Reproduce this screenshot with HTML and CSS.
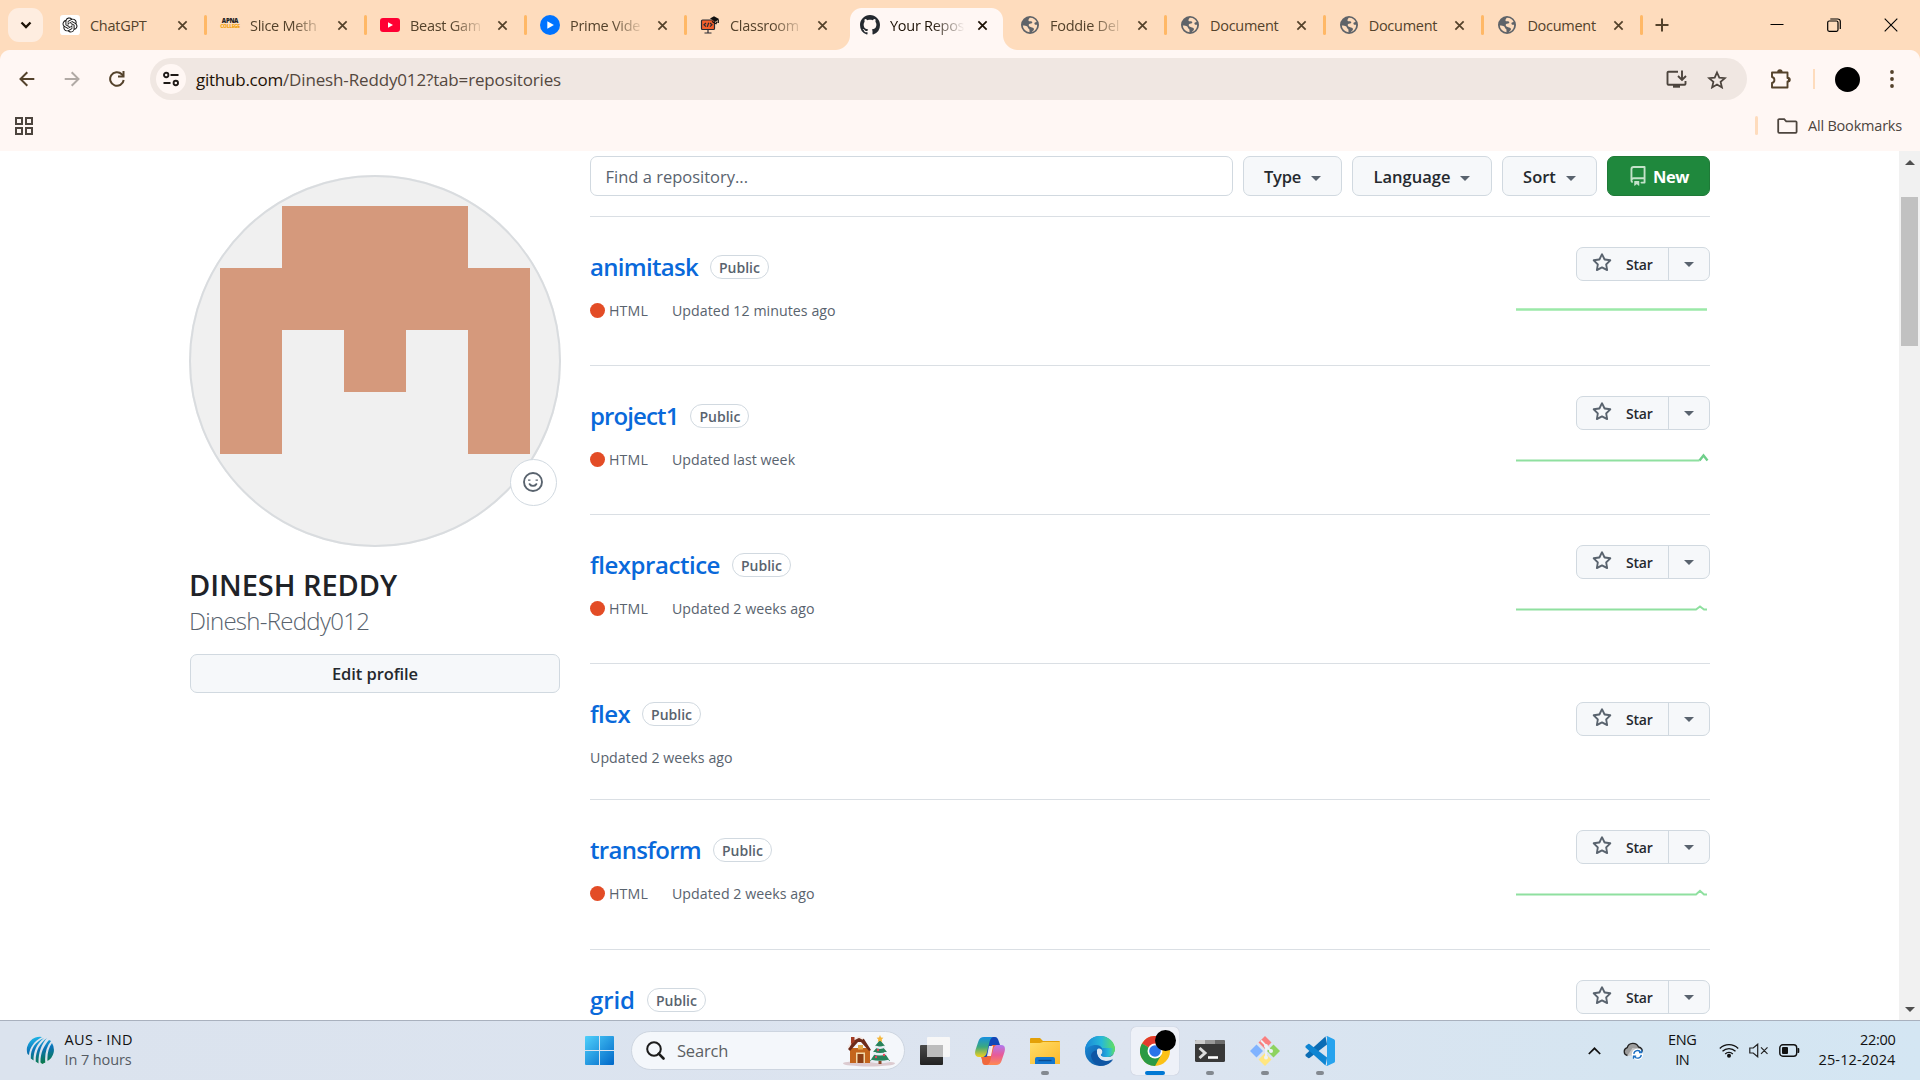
FILE: index.html
```
<!DOCTYPE html>
<html lang="en">
<head>
<meta charset="utf-8">
<title>Your Repositories</title>
<link rel="stylesheet" href="styles.css">
</head>
<body>
<svg class="defs" width="0" height="0" aria-hidden="true">
  <defs>
    <symbol id="i-close" viewBox="0 0 12 12"><path d="M1.500 1.500l9 9M10.500 1.500l-9 9" fill="none" stroke="currentColor" stroke-width="1.900"/></symbol>
    <symbol id="i-globe" viewBox="0 0 24 24"><path fill="#5f6368" d="M12 0a12 12 0 1 0 0 24 12 12 0 0 0 0-24zM2.400 12.500c2.500.2 4.200.1 6 1.600 1.300 1.100.5 2.300 1.900 3 1.200.6 1.100 1.500 1 4.400A9.600 9.600 0 0 1 2.400 12.500zM14.500 21.300c.6-1.700 2.600-1.700 2.800-3.700.1-2-2.500-1.900-4.300-2.800-1.600-.8-3-1.300-2.700-3.100.3-2 2.600-1.300 4.200-2.200 1.400-.8.300-2.300-1.300-2.500-1.600-.2-2.500.5-3.100-.8-.6-1.300.4-2.400 1.300-3.700 4.600-.4 8 2.100 9.500 5.500-1.900.3-3.300.8-3 2.200.3 1.500 2 1.600 3.600 1.500a9.600 9.600 0 0 1-7 9.600z"/></symbol>
    <symbol id="i-star" viewBox="0 0 16 16"><path fill="currentColor" d="M8 .25a.75.75 0 0 1 .673.418l1.882 3.815 4.210.612a.75.75 0 0 1 .416 1.279l-3.046 2.970.719 4.192a.751.751 0 0 1-1.088.791L8 12.347l-3.766 1.980a.75.75 0 0 1-1.088-.790l.720-4.194L.818 6.374a.75.75 0 0 1 .416-1.280l4.210-.611L7.327.668A.75.75 0 0 1 8 .25Zm0 2.445L6.615 5.500a.75.75 0 0 1-.564.410l-3.097.450 2.240 2.184a.75.75 0 0 1 .216.664l-.528 3.084 2.769-1.456a.75.75 0 0 1 .698 0l2.770 1.456-.530-3.084a.75.75 0 0 1 .216-.664l2.240-2.183-3.096-.450a.75.75 0 0 1-.564-.410L8 2.694Z"/></symbol>
  </defs>
</svg>

<div class="tabstrip">
  <div class="tab-search"><svg width="12" height="8" viewBox="0 0 12 8"><path d="M1.500 1.500L6 6l4.500-4.500" fill="none" stroke="#1d1206" stroke-width="2.300"/></svg></div>
  <div class="tab"><span class="fav"><svg width="20" height="20" viewBox="-4 -4 32 32"><rect x="-4" y="-4" width="32" height="32" rx="5" fill="#fff"/><path fill="#111" d="M22.2819 9.8211a5.9847 5.9847 0 0 0-.5157-4.9108 6.0462 6.0462 0 0 0-6.5098-2.9A6.0651 6.0651 0 0 0 4.9807 4.1818a5.9847 5.9847 0 0 0-3.9977 2.9 6.0462 6.0462 0 0 0 .7427 7.0966 5.98 5.98 0 0 0 .511 4.9107 6.051 6.051 0 0 0 6.5146 2.9001A5.9847 5.9847 0 0 0 13.2599 24a6.0557 6.0557 0 0 0 5.7718-4.2058 5.9894 5.9894 0 0 0 3.9977-2.9001 6.0557 6.0557 0 0 0-.7475-7.0729zm-9.022 12.6081a4.4755 4.4755 0 0 1-2.8764-1.0408l.1419-.0804 4.7783-2.7582a.7948.7948 0 0 0 .3927-.6813v-6.7369l2.02 1.1686a.071.071 0 0 1 .038.052v5.5826a4.504 4.504 0 0 1-4.4945 4.4944zm-9.6607-4.1254a4.4708 4.4708 0 0 1-.5346-3.0137l.142.0852 4.783 2.7582a.7712.7712 0 0 0 .7806 0l5.8428-3.3685v2.3324a.0804.0804 0 0 1-.0332.0615L9.74 19.9502a4.4992 4.4992 0 0 1-6.1408-1.6464zM2.3408 7.8956a4.485 4.485 0 0 1 2.3655-1.9728V11.6a.7664.7664 0 0 0 .3879.6765l5.8144 3.3543-2.0201 1.1685a.0757.0757 0 0 1-.071 0l-4.8303-2.7865A4.504 4.504 0 0 1 2.3408 7.872zm16.5963 3.8558L13.1038 8.364 15.1192 7.2a.0757.0757 0 0 1 .071 0l4.8303 2.7913a4.4944 4.4944 0 0 1-.6765 8.1042v-5.6772a.79.79 0 0 0-.407-.667zm2.0107-3.0231l-.142-.0852-4.7735-2.7818a.7759.7759 0 0 0-.7854 0L9.409 9.2297V6.8974a.0662.0662 0 0 1 .0284-.0615l4.8303-2.7866a4.4992 4.4992 0 0 1 6.6802 4.66zM8.3065 12.863l-2.02-1.1638a.0804.0804 0 0 1-.038-.0567V6.0742a4.4992 4.4992 0 0 1 7.3757-3.4537l-.142.0805L8.704 5.459a.7948.7948 0 0 0-.3927.6813zm1.0976-2.3654l2.602-1.4998 2.6069 1.4998v2.9994l-2.5974 1.4997-2.6067-1.4997Z"/></svg></span><span class="title">ChatGPT</span><svg class="x"><use href="#i-close"/></svg></div>
  <div class="tab"><span class="fav apna"><b>APNA</b><i>COLLEGE</i></span><span class="title fade">Slice Meth</span><svg class="x"><use href="#i-close"/></svg></div>
  <div class="tab"><span class="fav"><svg width="20" height="20" viewBox="0 0 20 20"><rect y="3" width="20" height="14" rx="3" fill="#ff0033"/><path d="M8 7.200v5.600l5-2.800z" fill="#fff"/></svg></span><span class="title fade">Beast Gam</span><svg class="x"><use href="#i-close"/></svg></div>
  <div class="tab"><span class="fav"><svg width="20" height="20" viewBox="0 0 20 20"><circle cx="10" cy="10" r="10" fill="#0073ff"/><path d="M7.300 6.300v7.400l6.600-3.700z" fill="#fff"/></svg></span><span class="title fade">Prime Vide</span><svg class="x"><use href="#i-close"/></svg></div>
  <div class="tab last"><span class="fav"><svg width="20" height="20" viewBox="0 0 20 20"><rect x="1.500" y="5" width="13" height="9.500" rx="1" fill="#f4602c" stroke="#2b2b33" stroke-width="1.200"/><path d="M6 8l-2 1.800 2 1.800M10 8l2 1.800-2 1.800M8.700 7.700l-1.400 4.200M8 15v2.500M4.500 18h7" stroke="#2b2b33" stroke-width="1.200" fill="none"/><path d="M10 3.500l4-2.300 5 2.800-3.300 2.800z" fill="#111"/><path d="M12 6.500l4 2.200 1-2M18.300 4.500v3.500" stroke="#111" stroke-width="1.200" fill="none"/></svg></span><span class="title fade">Classroom</span><svg class="x"><use href="#i-close"/></svg></div>
  <div class="tab active"><span class="fav"><svg width="20" height="20" viewBox="0 0 16 16"><path fill="#24292f" d="M8 0c4.420 0 8 3.580 8 8a8.013 8.013 0 0 1-5.450 7.590c-.400.080-.550-.170-.550-.380 0-.270.010-1.130.010-2.200 0-.750-.250-1.230-.540-1.480 1.780-.200 3.650-.880 3.650-3.950 0-.880-.310-1.590-.820-2.150.080-.200.360-1.020-.080-2.120 0 0-.670-.220-2.200.820-.640-.180-1.320-.270-2-.270-.680 0-1.360.090-2 .270-1.530-1.030-2.200-.820-2.200-.820-.440 1.100-.160 1.920-.080 2.120-.510.560-.820 1.280-.820 2.150 0 3.060 1.860 3.750 3.640 3.950-.230.200-.440.550-.510 1.070-.460.210-1.610.550-2.330-.660-.150-.240-.600-.830-1.230-.820-.670.010-.270.380.010.530.340.190.730.900.820 1.130.160.450.680 1.310 2.690.940 0 .670.010 1.300.010 1.490 0 .210-.150.450-.550.380A7.995 7.995 0 0 1 0 8c0-4.420 3.580-8 8-8Z"/></svg></span><span class="title fade">Your Repos</span><svg class="x"><use href="#i-close"/></svg></div>
  <div class="tab"><span class="fav"><svg width="18" height="18"><use href="#i-globe"/></svg></span><span class="title fade">Foddie Del</span><svg class="x"><use href="#i-close"/></svg></div>
  <div class="tab doc"><span class="fav"><svg width="18" height="18"><use href="#i-globe"/></svg></span><span class="title">Document</span><svg class="x"><use href="#i-close"/></svg></div>
  <div class="tab doc"><span class="fav"><svg width="18" height="18"><use href="#i-globe"/></svg></span><span class="title">Document</span><svg class="x"><use href="#i-close"/></svg></div>
  <div class="tab doc"><span class="fav"><svg width="18" height="18"><use href="#i-globe"/></svg></span><span class="title">Document</span><svg class="x"><use href="#i-close"/></svg></div>
  <svg class="newtab" width="14" height="14" viewBox="0 0 14 14"><path d="M7 .5v13M.5 7h13" stroke="#54422b" stroke-width="2"/></svg>
  <div class="winctl">
    <svg width="14" height="14" viewBox="0 0 14 14"><path d="M.5 6.500h13" stroke="#000"/></svg>
    <svg width="14" height="14" viewBox="0 0 14 14" fill="none" stroke="#000" stroke-width="1.200"><rect x=".7" y="3" width="10.300" height="10.300" rx="1.500"/><path d="M3.300 1h7.500a2.500 2.500 0 0 1 2.500 2.500v7.500"/></svg>
    <svg width="14" height="14" viewBox="0 0 14 14"><path d="M.7.700l12.600 12.600M13.300.7L.7 13.300" stroke="#000" stroke-width="1.100"/></svg>
  </div>
</div>

<div class="chrome">
  <div class="toolbar">
    <svg class="nav" width="16" height="16" viewBox="0 0 16 16"><path d="M15.300 8H2M8.300 1.200L1.500 8l6.800 6.800" fill="none" stroke="#54422b" stroke-width="2"/></svg>
    <svg class="nav" width="16" height="16" viewBox="0 0 16 16"><path d="M.7 8H14M7.700 1.200L14.500 8l-6.800 6.800" fill="none" stroke="#b1aaa5" stroke-width="2"/></svg>
    <svg class="nav" width="16" height="16" viewBox="0 0 16 16"><path d="M14.700 9A6.800 6.800 0 1 1 12.800 3.200L14.500 5" fill="none" stroke="#54422b" stroke-width="2"/><path d="M15.500 0v6.500H9V4.500h4.500V0z" fill="#54422b"/></svg>
    <div class="omnibox">
      <span class="site"><svg width="16" height="16" viewBox="0 0 16 16" fill="none" stroke="#1f1a17" stroke-width="1.900"><circle cx="3.200" cy="4" r="2.200"/><path d="M7.500 4h8M.5 12h7"/><circle cx="12.800" cy="12" r="2.200"/></svg></span>
      <span class="url"><b>github.com</b>/Dinesh-Reddy012?tab=repositories</span>
      <svg class="install" width="21" height="19" viewBox="0 0 21 19"><path d="M12 1.700H2.500a1 1 0 0 0-1 1v11a1 1 0 0 0 1 1h16a1 1 0 0 0 1-1V11" fill="none" stroke="#4d453e" stroke-width="1.900"/><path d="M7 14.500h7v3.200H7z" fill="#4d453e"/><path d="M16 .5v9M12 6l4 4 4-4" fill="none" stroke="#4d453e" stroke-width="1.900"/></svg>
      <svg class="fave" width="20" height="19" viewBox="0 0 20 19"><path d="M10 2.500l2.300 5.200 5.600.5-4.300 3.700 1.300 5.500-4.900-2.900-4.900 2.900 1.300-5.500L2.100 8.200l5.600-.5z" fill="none" stroke="#4d453e" stroke-width="1.800"/></svg>
    </div>
    <svg class="ext" width="22" height="22" viewBox="0 0 22 22"><path d="M2 4.500h15.500v5.500a1.500 1.500 0 0 1 0 3.500v6H2v-4.500c3.200-.8 3.200-5.200 0-6z" fill="none" stroke="#54422b" stroke-width="1.900" stroke-linejoin="round"/><path d="M7.200 4a2.700 2.700 0 0 1 5.400 0zM18 9a2.700 2.700 0 0 1 0 5.400z" fill="#54422b"/></svg>
    <i class="bar"></i>
    <i class="me"></i>
    <svg class="dots" width="4" height="18" viewBox="0 0 4 18" fill="#54422b"><circle cx="2" cy="2" r="1.900"/><circle cx="2" cy="9" r="1.900"/><circle cx="2" cy="16" r="1.900"/></svg>
  </div>
  <div class="bookmarks">
    <svg width="18" height="18" viewBox="0 0 18 18" fill="none" stroke="#4d453e" stroke-width="2"><path d="M1 1h6v6H1zM11 1h6v6h-6zM1 11h6v6H1zM11 11h6v6h-6z"/></svg>
    <i class="bar"></i>
    <svg width="21" height="16" viewBox="0 0 21 16"><path d="M1.200 2.200a1 1 0 0 1 1-1h5l2 2.100h9.400a1 1 0 0 1 1 1v9.500a1 1 0 0 1-1 1H2.200a1 1 0 0 1-1-1z" fill="none" stroke="#4d453e" stroke-width="1.800"/></svg>
    <span class="allb">All Bookmarks</span>
  </div>
</div>

<div class="page">
  <main class="content">
    <aside class="profile">
      <div class="avatar">
        <svg width="372" height="372" viewBox="0 0 420 420"><rect width="420" height="420" fill="#f0f0f0"/><path fill="#d5997c" d="M105 35h210v70h70v210h-70V175h-70v70h-70v-70h-70v140H35V105h70z"/></svg>
        <span class="status"><svg width="20" height="20" viewBox="0 0 16 16" fill="none" stroke="#59636e" stroke-width="1.500"><circle cx="8" cy="8" r="7.200"/><path d="M5.300 9.700c1.300 1.900 4.100 1.900 5.400 0" stroke-linecap="round"/><path d="M5 6v1M11 6v1" stroke-width="1.900"/></svg></span>
      </div>
      <h1><span class="name">DINESH REDDY</span><span class="login">Dinesh-Reddy012</span></h1>
      <button class="edit"><span>Edit profile</span></button>
    </aside>
    <section class="repos">
      <div class="filters">
        <div class="find"><span>Find a repository...</span></div>
        <button class="w-type"><span>Type</span><i class="caret"></i></button>
        <button class="w-lang"><span>Language</span><i class="caret"></i></button>
        <button class="w-sort"><span>Sort</span><i class="caret"></i></button>
        <button class="new"><svg width="20" height="20" viewBox="0 0 16 16"><path fill="#c4e2ca" d="M2 2.500A2.500 2.500 0 0 1 4.500 0h8.750a.75.75 0 0 1 .75.75v12.500a.75.75 0 0 1-.75.75h-2.500a.75.75 0 0 1 0-1.500h1.750v-2h-8a1 1 0 0 0-.714 1.700.75.75 0 1 1-1.072 1.050A2.495 2.495 0 0 1 2 11.500Zm10.500-1h-8a1 1 0 0 0-1 1v6.708A2.486 2.486 0 0 1 4.500 9h8ZM5 12.250a.25.25 0 0 1 .25-.250h3.500a.25.25 0 0 1 .25.250v3.250a.25.25 0 0 1-.400.200l-1.450-1.087a.249.249 0 0 0-.300 0L5.400 15.700a.25.25 0 0 1-.400-.200Z"/></svg><span>New</span></button>
      </div>
      <ul class="list">
        <li><div><h3><a class="t1">animitask</a><em><span>Public</span></em></h3><p><i class="dot"></i><span class="lang">HTML</span><span class="upd">Updated 12 minutes ago</span></p></div>
          <div class="side"><div class="starbtn"><span><svg width="20" height="20"><use href="#i-star"/></svg><b>Star</b></span><span><i class="caret"></i></span></div><svg class="spark" width="194" height="15"><path d="M0 10.500h191" stroke="#9be9a8" stroke-width="2.500"/></svg></div></li>
        <li><div><h3><a class="t2">project1</a><em><span>Public</span></em></h3><p><i class="dot"></i><span class="lang">HTML</span><span class="upd">Updated last week</span></p></div>
          <div class="side"><div class="starbtn"><span><svg width="20" height="20"><use href="#i-star"/></svg><b>Star</b></span><span><i class="caret"></i></span></div><svg class="spark" width="194" height="15"><path d="M0 12.500h183.500" fill="none" stroke="#8fe0a0" stroke-width="2"/><path d="M183.500 12.500l4-5 4 5" fill="none" stroke="#6fcf8a" stroke-width="2.400"/></svg></div></li>
        <li><div><h3><a class="t3">flexpractice</a><em><span>Public</span></em></h3><p><i class="dot"></i><span class="lang">HTML</span><span class="upd">Updated 2 weeks ago</span></p></div>
          <div class="side"><div class="starbtn"><span><svg width="20" height="20"><use href="#i-star"/></svg><b>Star</b></span><span><i class="caret"></i></span></div><svg class="spark" width="194" height="15"><path d="M0 12.500h180l4-3 4 3h3" fill="none" stroke="#8fe0a0" stroke-width="2"/></svg></div></li>
        <li class="short"><div><h3><a class="t4">flex</a><em><span>Public</span></em></h3><p><span class="upd">Updated 2 weeks ago</span></p></div>
          <div class="side"><div class="starbtn"><span><svg width="20" height="20"><use href="#i-star"/></svg><b>Star</b></span><span><i class="caret"></i></span></div></div></li>
        <li class="tall"><div><h3><a class="t5">transform</a><em><span>Public</span></em></h3><p><i class="dot"></i><span class="lang">HTML</span><span class="upd">Updated 2 weeks ago</span></p></div>
          <div class="side"><div class="starbtn"><span><svg width="20" height="20"><use href="#i-star"/></svg><b>Star</b></span><span><i class="caret"></i></span></div><svg class="spark" width="194" height="15"><path d="M0 12.500h180l4-3.700 4 3.700h3" fill="none" stroke="#8fe0a0" stroke-width="2"/></svg></div></li>
        <li><div><h3><a class="t6">grid</a><em><span>Public</span></em></h3></div>
          <div class="side"><div class="starbtn"><span><svg width="20" height="20"><use href="#i-star"/></svg><b>Star</b></span><span><i class="caret"></i></span></div></div></li>
      </ul>
    </section>
  </main>
  <div class="scroll"><i class="up"></i><i class="thumb"></i><i class="down"></i></div>
</div>

<div class="taskbar">
  <div class="widget">
    <svg width="28" height="29" viewBox="0 0 28 29"><defs><linearGradient id="gw" x1=".2" y1="0" x2=".4" y2="1"><stop offset="0" stop-color="#1fb9ea"/><stop offset=".5" stop-color="#0b72b6"/><stop offset="1" stop-color="#0a7a4c"/></linearGradient></defs><path fill="url(#gw)" d="M16 1a13 13 0 0 0-14.500 17l1.500 1C3.500 12 8 5 16 1zM18 2C9 6 4.500 13 4.800 22.500l2.700 2C7.500 15 10.500 8 18 2zM21 2c-7.500 5.500-11.500 13-11.300 23.500l2.800 2C12.300 17 15 9 21 2zM23 4c-5.500 6-8.800 14-8.500 22.500l1.800 1.500 3-1.500C18.500 18 20.500 10.500 25 5zM26 7c-3.500 4.500-5 11-4.500 18A13 13 0 0 0 26 7z"/></svg>
    <div><span class="w1">AUS - IND</span><span class="w2">In 7 hours</span></div>
  </div>
  <div class="apps">
    <svg class="start" width="29" height="29" viewBox="0 0 29 29"><defs><linearGradient id="gs" x1="0" y1="0" x2="1" y2="1"><stop offset="0" stop-color="#4fd0fb"/><stop offset="1" stop-color="#0067c8"/></linearGradient></defs><path fill="url(#gs)" d="M1 0h13v14H0V1a1 1 0 0 1 1-1zM15 0h13a1 1 0 0 1 1 1v13H15zM0 15h14v14H1a1 1 0 0 1-1-1zM15 15h14v13a1 1 0 0 1-1 1H15z"/></svg>
    <div class="search"><svg width="19" height="19" viewBox="0 0 19 19"><circle cx="8" cy="8" r="6.800" fill="none" stroke="#1c1c1c" stroke-width="2"/><path d="M12.700 12.700l4.800 4.800" stroke="#1c1c1c" stroke-width="2.600" stroke-linecap="round"/></svg><span class="stext">Search</span>
      <svg class="house" width="54" height="32" viewBox="0 0 54 32"><ellipse cx="27" cy="28.500" rx="26" ry="3" fill="#dccbd0"/><path d="M8 13h20v15H8z" fill="#c4651c"/><path d="M6 14L11 5l6-3 5 2 7 11-2 1-8-9h-3l-8 9z" fill="#6d2b1a"/><path d="M6 13L11 5l6-3 4 2" fill="none" stroke="#f4e9e4" stroke-width="1.600"/><path d="M9 2h3.500v5L9 9z" fill="#a33c24"/><path d="M14 17.500h9V28h-9z" fill="#f2d8a8"/><path d="M15.500 19h6v9h-6z" fill="#8e3f14"/><rect x="16" y="10" width="5" height="4.500" fill="#e2a94b"/><path d="M38 5l5 6h-3l5 6h-3l6 9H28l6-9h-3l5-6h-3z" fill="#27835b"/><path d="M33 11.500q5 2.500 10 0M31 18q7 2.500 14 0M29 26q9 2 18 0" stroke="#e8edf4" stroke-width="2.400" fill="none"/><path d="M38 0l1 2.400 2.400.3-1.700 1.700.5 2.500L38 5.700l-2.200 1.200.5-2.500-1.700-1.700 2.400-.3z" fill="#f4b63a"/><g fill="#e8465c"><circle cx="36" cy="15" r="1.200"/><circle cx="42" cy="20" r="1.200"/><circle cx="34" cy="22" r="1.200"/></g><path d="M36.500 26h3v3h-3z" fill="#8a4a2a"/></svg></div>
    <div class="app"><svg width="30" height="30" viewBox="0 0 30 30"><defs><linearGradient id="gt" x1="0" y1="0" x2="0" y2="1"><stop offset="0" stop-color="#4a4a4a"/><stop offset="1" stop-color="#222"/></linearGradient></defs><rect x="0" y="9" width="23" height="20" rx="1" fill="url(#gt)"/><rect x="7" y="1" width="23" height="20" rx="1" fill="#f7f7f7"/><path d="M7 9h16v12H8a1 1 0 0 1-1-1z" fill="#bdbdbd"/></svg></div>
    <div class="app"><svg width="30" height="28" viewBox="0 0 30 28"><defs><linearGradient id="gc1" x1="0" y1="0" x2="0" y2="1"><stop offset="0" stop-color="#1690e0"/><stop offset=".5" stop-color="#3ca97e"/><stop offset="1" stop-color="#f3cf1d"/></linearGradient><linearGradient id="gc2" x1="0" y1="0" x2="0" y2="1"><stop offset="0" stop-color="#b07af0"/><stop offset=".5" stop-color="#e85a98"/><stop offset="1" stop-color="#ff8a50"/></linearGradient></defs><path d="M9 0h11c2 0 3 1.500 4 5l1 3h-4c-2 0-3 1-4 4l-3 10H7z" fill="#1246b8"/><path d="M9 0h9c-2.500 1-3 3-4 7l-2 8c-1 3.500-2 5-5 5H4c-4 0-4.500-3-3.500-7L3.500 4C4.500 1.500 6 0 9 0z" fill="url(#gc1)"/><path d="M21 28H10c-2 0-3-1.500-3-5l-1-3h4c2 0 3-1 4-4l3-8h6z" fill="#f0683c"/><path d="M21 28h-9c2.500-1 3-3 4-7l2-8c1-3.500 2-5 5-5h3c4 0 4.500 3 3.500 7l-3 9c-1 2.500-2.500 4-5.500 4z" fill="url(#gc2)"/><path d="M14 9h4l-2 10h-4z" fill="#fff" opacity=".85"/></svg></div>
    <div class="app run"><svg width="30" height="26" viewBox="0 0 30 26"><defs><linearGradient id="ge" x1="0" y1="0" x2="1" y2="1"><stop offset="0" stop-color="#ffdd68"/><stop offset="1" stop-color="#fdb92a"/></linearGradient></defs><path d="M0 1a1 1 0 0 1 1-1h9l3 3h16a1 1 0 0 1 1 1v8H0z" fill="#e3a008"/><path d="M0 5h10l3-1h17v22H0z" fill="url(#ge)"/><path d="M5 26v-5a2 2 0 0 1 2-2h16a2 2 0 0 1 2 2v5z" fill="#1377cf"/><path d="M8.500 22.500h13" stroke="#0b4c8f" stroke-width="1.400"/></svg></div>
    <div class="app"><svg width="30" height="30" viewBox="0 0 30 30"><defs><linearGradient id="gg" x1="0" y1="0" x2="1" y2="0"><stop offset="0" stop-color="#1a86d8"/><stop offset=".55" stop-color="#27b9d8"/><stop offset="1" stop-color="#62e05c"/></linearGradient><linearGradient id="gg2" x1="0" y1="0" x2="1" y2="1"><stop offset="0" stop-color="#1b90dc"/><stop offset="1" stop-color="#0c4b96"/></linearGradient></defs><circle cx="15" cy="15" r="15" fill="url(#gg2)"/><path d="M0 14.500C0 6 7 0 15 0c9 0 15 6.500 15 13 0 5-4 8-8.500 8-4 0-5.500-1.500-5-2.500 3-3 1-9.500-5.500-9.500C6 9 1.500 11.500 0 14.500z" fill="url(#gg)"/><path d="M12 14c-1 6 3 11 9 11 3 0 5-1 7-2 1-.5 1.500 0 1 .8L31 24V12l-3 7c-2 2-5 2.300-7 2-4-.3-5.500-1.500-5-2.500 1-1 1.500-2 1.300-3.500C17 12.500 13 11.500 12 14z" fill="#dde7f2"/><path d="M30 12c0 5.500-4 9-8.500 9-4 0-5.500-1.500-5-2.500C18.500 16.500 18 14 17 12z" fill="url(#gg)"/><path d="M6 20c1 6 6 10 10 9.800 5 0 9.500-2.300 12-6.300-2 1-4 1.500-7 1.500-5.500 0-10-5-9-10.500C9 14 6 17 6 20z" fill="#0f56a4"/></svg></div>
    <div class="app on"><svg width="30" height="30" viewBox="0 0 30 30"><circle cx="15" cy="15" r="15" fill="#fbc116"/><path d="M15 15L2 7.500A15 15 0 0 1 28 7.500z" fill="#e33b2e"/><path d="M15 15L2 7.500A15 15 0 0 0 15 30l6.500-11.500z" fill="#2b9a45"/><circle cx="15" cy="15" r="7.500" fill="#fff"/><circle cx="15" cy="15" r="5.800" fill="#2a74ea"/></svg><i class="blob"></i></div>
    <div class="app run"><svg width="30" height="22" viewBox="0 0 30 22"><rect width="30" height="22" rx="1.500" fill="#383838"/><path d="M1.500 0H10v4H0V1.500A1.500 1.500 0 0 1 1.500 0z" fill="#ccc"/><path d="M10 0h10v4H10z" fill="#999"/><path d="M20 0h8.500A1.500 1.500 0 0 1 30 1.500V4H20z" fill="#6c6c6c"/><path d="M4.500 8l5.500 5-5.500 5" fill="none" stroke="#ddd" stroke-width="3"/><path d="M13 17.500h10" stroke="#fff" stroke-width="2.600"/></svg></div>
    <div class="app run"><svg width="30" height="30" viewBox="0 0 30 30"><path d="M15 0l6.500 6.500L15 13 8.500 6.500z" fill="#f98080"/><path d="M6.500 8.500L13 15l-6.500 6.500L0 15z" fill="#80b3ff"/><path d="M23.500 8.500L30 15l-6.500 6.500L17 15z" fill="#8dd35f"/><path d="M15 17l6.500 6.500L15 30l-6.500-6.500z" fill="#ffe680"/><path d="M11 4.500l5 5v12M16 10l5 5" stroke="#eef2f6" stroke-width="1.800" fill="none"/><circle cx="16" cy="10" r="2" fill="#eef2f6"/><circle cx="21" cy="15" r="2" fill="#eef2f6"/><circle cx="16" cy="21.500" r="2" fill="#eef2f6"/></svg></div>
    <div class="app run"><svg width="30" height="30" viewBox="0 0 30 30"><path d="M22 8.500L4.500 22l-1 .3L.5 20v-1.500L20.500.5z" fill="#0b6cb4"/><path d="M22 21.500L4.500 8l-1-.3L.5 10v1.500l20 18z" fill="#0f85d2"/><path d="M22 0l7 3.200a2 2 0 0 1 1 1.800v20a2 2 0 0 1-1 1.800L22 30c-.8 0-1.500-.5-1.500-.5 1 .6 1.500-.2 1.500-1V1.700c0-1-.7-1.700-1.500-1.200z" fill="#27a3ee"/></svg></div>
  </div>
  <div class="tray">
    <svg class="chev" width="13" height="8" viewBox="0 0 13 8"><path d="M.8 7L6.500 1.300 12.200 7" fill="none" stroke="#111" stroke-width="1.700"/></svg>
    <svg class="cloud" width="21" height="18" viewBox="0 0 21 18"><path d="M4.500 13.500a4 4 0 0 1-.3-7.800A6 6 0 0 1 15.500 5a4.200 4.200 0 0 1 3.500 6" fill="#9d9d9d" stroke="#222" stroke-width="1.300"/><path d="M4.500 13.500h8l5-6.500-8-1z" fill="#c8c8c8"/><circle cx="14.500" cy="12.300" r="5.700" fill="#fff"/><path d="M10.800 11.800a3.800 3.800 0 0 1 7-1.500M18.300 12.800a3.800 3.800 0 0 1-7 1.500M18.700 7.800v2.700H16M10.500 16.800v-2.700h2.700" fill="none" stroke="#1b6fc2" stroke-width="1.300"/></svg>
    <div class="ime"><span class="eng">ENG</span><span class="in">IN</span></div>
    <svg class="wifi" width="20" height="15" viewBox="0 0 20 15"><path d="M.8 5.500a13 13 0 0 1 18.400 0M3.500 8.300a9.200 9.200 0 0 1 13 0M6.200 11a5.400 5.400 0 0 1 7.600 0" fill="none" stroke="#111" stroke-width="1.300"/><circle cx="10" cy="12.800" r="2" fill="#111"/></svg>
    <svg class="vol" width="20" height="15" viewBox="0 0 20 15" fill="none" stroke="#222" stroke-width="1.200"><path d="M.8 5h3.400L8.700 1.200v12.600L4.200 10H.8zM12 4.300l6.500 6.500M18.500 4.300L12 10.800"/></svg>
    <svg class="bat" width="21" height="13" viewBox="0 0 21 13"><rect x=".8" y=".8" width="16.900" height="11.400" rx="3" fill="none" stroke="#111" stroke-width="1.400"/><rect x="3" y="3" width="6" height="7" rx="1" fill="#111"/><path d="M18.500 4h.8a1 1 0 0 1 1 1v3a1 1 0 0 1-1 1h-.8z" fill="#111"/></svg>
    <div class="clock"><span class="time">22:00</span><span class="date">25-12-2024</span></div>
  </div>
</div>
</body>
</html>
```
FILE: styles.css
```
* { box-sizing: border-box; }
body { margin: 0; width: 1920px; height: 1080px; overflow: hidden; background: #fff; font-family: "Open Sans", "Noto Sans", sans-serif; color: #1f2328; display: flex; flex-direction: column; }
svg { display: block; flex: none; }
span, b, a { white-space: nowrap; }
i, em { font-style: normal; }
h1, h3, p, ul { margin: 0; padding: 0; }
.defs { position: absolute; }

/* Tab strip */
.tabstrip { height: 50px; flex: none; background: #fedcbd; display: flex; align-items: center; }
.tab-search { width: 35px; height: 34px; margin: 0 4px 0 8px; border-radius: 11px; background: #feede0; display: flex; align-items: center; justify-content: center; }
.tab { width: 160px; height: 50px; padding-left: 13px; display: flex; align-items: center; position: relative; color: #54422b; flex: none; }
.tab::after { content: ""; width: 3px; height: 20px; border-radius: 2px; background: #ffb866; margin-left: 16px; }
.tab.doc { width: 158.700px; }
.tab.doc .title { width: 76.500px; }
.tab.last::after, .tab.active::after { visibility: hidden; }
.fav { width: 20px; height: 20px; display: flex; align-items: center; justify-content: center; flex: none; }
.title { margin-left: 10px; width: 78px; font-size: 14.500px; line-height: 22px; padding-top: 1px; letter-spacing: -.28px; }
.title.fade { mask-image: linear-gradient(90deg, #000 42px, transparent 75px); }
.x { width: 11px; height: 11px; margin-left: 11px; color: #54422b; }
.tab.active { color: #1d1206; background: radial-gradient(circle at 100% 0, transparent 15px, #fff7f4 15.500px); background-repeat: no-repeat; background-size: 0 0; }
.tab.active .x { color: #1d1206; }
.tab.active::before { content: ""; position: absolute; left: -12px; top: 8px; width: 183px; height: 42px; background:
  radial-gradient(circle at 0 0, transparent 14.500px, #fff7f4 15.500px) 0 27px / 15px 15px no-repeat,
  radial-gradient(circle at 100% 0, transparent 14.500px, #fff7f4 15.500px) 168px 27px / 15px 15px no-repeat,
  linear-gradient(#fff7f4, #fff7f4) 15px 12px / 153px 30px no-repeat,
  linear-gradient(#fff7f4, #fff7f4) 27px 0 / 129px 12px no-repeat,
  radial-gradient(circle at 27px 12px, #fff7f4 11.500px, transparent 12.500px) 0 0 / 27px 12px no-repeat,
  radial-gradient(circle at 0 12px, #fff7f4 11.500px, transparent 12.500px) 156px 0 / 12px 12px no-repeat; }
.tab.active > * { position: relative; }
.apna { flex-direction: column; font-size: 6px; line-height: 5px; color: #222; letter-spacing: -.3px; padding-bottom: 3px; }
.apna b { font-weight: 800; }
.apna i { font-size: 5px; font-weight: 800; color: #f3a51b; letter-spacing: -.4px; }
.newtab { margin-left: 12px; }
.winctl { margin-left: auto; display: flex; gap: 43px; padding-right: 22px; }

/* Toolbar and bookmarks */
.chrome { height: 101px; flex: none; background: radial-gradient(circle at 10px 10px, #fff7f4 9.500px, #fedcbd 10.500px) 0 0 / 10px 10px no-repeat, radial-gradient(circle at 0 10px, #fff7f4 9.500px, #fedcbd 10.500px) 100% 0 / 10px 10px no-repeat, #fff7f4; }
.toolbar { height: 58px; display: flex; align-items: center; padding-left: 19px; }
.nav { margin-right: 29px; }
.omnibox { width: 1597px; height: 42px; margin-left: -4.500px; border-radius: 21px; background: #f0e7e2; display: flex; align-items: center; padding: 0 20px 0 6px; }
.site { width: 30px; height: 30px; border-radius: 50%; background: #fff7f4; display: flex; align-items: center; justify-content: center; }
.url { margin-left: 10.500px; padding-top: 2px; font-size: 17px; line-height: 24px; letter-spacing: -.15px; color: #54483f; }
.url b { font-weight: 400; letter-spacing: -.24px; color: #1d1206; }
.install { margin-left: auto; margin-right: 20px; }
.ext { margin-left: 23px; }
.toolbar .bar { width: 2px; height: 20px; background: #fedcbd; margin: 0 20px 0 21px; }
.me { width: 25px; height: 25px; border-radius: 50%; background: #000; }
.dots { margin-left: 30px; }
.bookmarks { height: 35px; display: flex; align-items: center; padding: 0 18px 0 15px; }
.bookmarks .bar { width: 3px; height: 19px; border-radius: 2px; background: #fedcbd; margin: 0 19px 0 auto; }
.allb { margin-left: 10px; font-size: 14.500px; letter-spacing: -.2px; color: #4d453e; }

/* Repository page */
.page { height: 869px; flex: none; display: flex; background: #fff; overflow: hidden; }
.content { width: 1899px; display: flex; padding-left: 189px; }
.profile { width: 372px; padding-top: 24px; margin-right: 29px; display: flex; flex-direction: column; }
.avatar { position: relative; width: 372px; height: 372px; }
.avatar > svg { border-radius: 50%; }
.avatar::after { content: ""; position: absolute; inset: 0; border-radius: 50%; border: 2px solid #d9dcdf; }
.status { position: absolute; z-index: 1; right: 4px; top: 284px; width: 47px; height: 47px; border-radius: 50%; background: #fff; border: 1px solid #d1d9e0; display: flex; align-items: center; justify-content: center; padding: 0 2px 1px 0; }
.profile h1 { display: flex; flex-direction: column; align-items: flex-start; padding: 19px 0 16px; }
.name { font-size: 29px; font-weight: 600; line-height: 38px; letter-spacing: -.05px; }
.login { font-size: 24px; font-weight: 300; line-height: 34px; letter-spacing: -.72px; color: #59636e; }
button { font: 600 16.500px/1 "Open Sans", sans-serif; color: #25292e; background: #f6f8fa; border: 1px solid #d1d9e0; border-radius: 7px; display: flex; align-items: center; justify-content: center; padding: 2px 0 0; height: 40px; }
.edit { height: 39px; width: 370px; margin-left: 1px; letter-spacing: -.08px; }
.repos { width: 1120px; padding-top: 5px; }
.filters { display: flex; gap: 10px; padding-bottom: 20px; border-bottom: 1px solid #dadfe4; }
.find { flex: 1; height: 40px; border: 1px solid #d1d9e0; border-radius: 7px; padding-left: 14.500px; display: flex; align-items: center; font-size: 16.500px; color: #59636e; }
.w-type { width: 99px; letter-spacing: -.2px; }
.w-lang { width: 140px; }
.w-sort { width: 95px; }
.caret { width: 0; height: 0; border: 5px solid transparent; border-top-color: #59636e; border-bottom: 0; }
button .caret { margin-left: 10px; margin-top: 2px; }
.new { width: 103px; background: #1f883d; border-color: #1f7a38; color: #fff; font-weight: 700; letter-spacing: -.4px; }
.new svg { margin-right: 5px; margin-top: -2px; }
.list { list-style: none; }
.list li { height: 149px; border-bottom: 1px solid #dadfe4; display: flex; justify-content: space-between; padding-top: 30px; }
.list li.short { height: 136px; }
.list li.tall { height: 150px; }
h3 { display: flex; align-items: center; height: 40px; margin-bottom: 13px; }
h3 a { font-size: 24px; font-weight: 600; color: #0969da; line-height: 30px; }
.t1 { letter-spacing: -.7px; }
.t2 { letter-spacing: -.89px; }
.t3 { letter-spacing: -.46px; }
.t4 { letter-spacing: -.6px; }
.t5 { letter-spacing: -.7px; }
.t6 { letter-spacing: -.08px; }
em { height: 24px; border: 1px solid #d1d9e0; border-radius: 12px; padding: 0 8px; margin-left: 12px; font-size: 14px; font-weight: 600; color: #59636e; line-height: 23px; }
.list p { display: flex; align-items: center; height: 20px; font-size: 14.200px; color: #59636e; }
.dot { width: 15px; height: 15px; border-radius: 50%; background: #e34c26; margin-right: 4px; }
.lang { margin-right: 24px; letter-spacing: .13px; padding-top: 1px; }
.upd { letter-spacing: .05px; padding-top: 1px; }
.side { display: flex; flex-direction: column; align-items: flex-end; }
.short .side { padding-top: 8px; }
.starbtn { width: 134px; height: 34px; border: 1px solid #d1d9e0; border-radius: 7px; background: #f6f8fa; display: flex; color: #59636e; }
.starbtn > span { display: flex; align-items: center; justify-content: center; flex: 1; }
.starbtn > span:first-child { flex: none; width: 92px; border-right: 1px solid #d1d9e0; justify-content: flex-start; padding-left: 15px; }
.starbtn b { margin-left: 14px; font-size: 14px; font-weight: 600; letter-spacing: -.2px; color: #25292e; }
.starbtn svg { margin-top: -2px; }
.spark { margin-top: 18px; }
.scroll { width: 21px; background: #f1f1f1; display: flex; flex-direction: column; align-items: center; padding: 9px 0 8px; }
.up { border: 5px solid transparent; border-bottom-color: #505050; border-top: 0; }
.thumb { width: 17px; height: 149px; background: #c1c1c1; margin-top: 32px; }
.down { border: 5px solid transparent; border-top-color: #505050; border-bottom: 0; margin-top: auto; }

/* Taskbar */
.taskbar { height: 60px; flex: none; border-top: 1px solid #a9b1be; background: linear-gradient(90deg, #dbe3ee 0%, #dce4f0 60%, #d5e5f1 85%, #d4e6f3 100%); display: flex; align-items: center; color: #111; font-size: 14.500px; }
.widget { display: flex; align-items: center; width: 585px; padding-left: 26px; }
.widget div { display: flex; flex-direction: column; margin-left: 10.500px; line-height: 20px; padding-bottom: 2px; }
.w1 { letter-spacing: .33px; }
.w2 { letter-spacing: -.1px; color: #555b63; }
.apps { display: flex; align-items: center; }
.search { width: 274px; height: 39px; margin: 0 6px 0 17px; border-radius: 20px; background: #f4f7fb; border: 1px solid #cdd5e0; display: flex; align-items: center; padding: 0 8px 0 14px; }
.stext { margin-left: 12px; font-size: 16.500px; letter-spacing: -.2px; color: #5c5f63; }
.house { margin-left: auto; }
.app { width: 48px; height: 48px; margin-right: 7px; display: flex; align-items: center; justify-content: center; position: relative; border-radius: 5px; }
.app.run::after, .app.on::after { content: ""; position: absolute; bottom: 0; width: 8px; height: 4px; border-radius: 2px; background: #838990; }
.app.on { background: #eef1f8; box-shadow: 0 0 1px #aab; }
.app.on::after { width: 20px; background: #0078d4; }
.blob { position: absolute; right: 3px; top: 3px; width: 21px; height: 21px; border-radius: 50%; background: #000; }
.tray { margin-left: auto; display: flex; align-items: center; padding-right: 24.500px; }
.cloud { margin-left: 22px; }
.ime, .clock { display: flex; flex-direction: column; line-height: 20px; align-items: center; padding-bottom: 1px; }
.eng, .in { letter-spacing: -.35px; }
.ime { margin: 0 22px 0 24px; }
.vol { margin-left: 10px; }
.bat { margin-left: 10px; }
.clock { align-items: flex-end; margin-left: 19px; }
.time { letter-spacing: -.3px; }
.date { letter-spacing: .13px; }
```
